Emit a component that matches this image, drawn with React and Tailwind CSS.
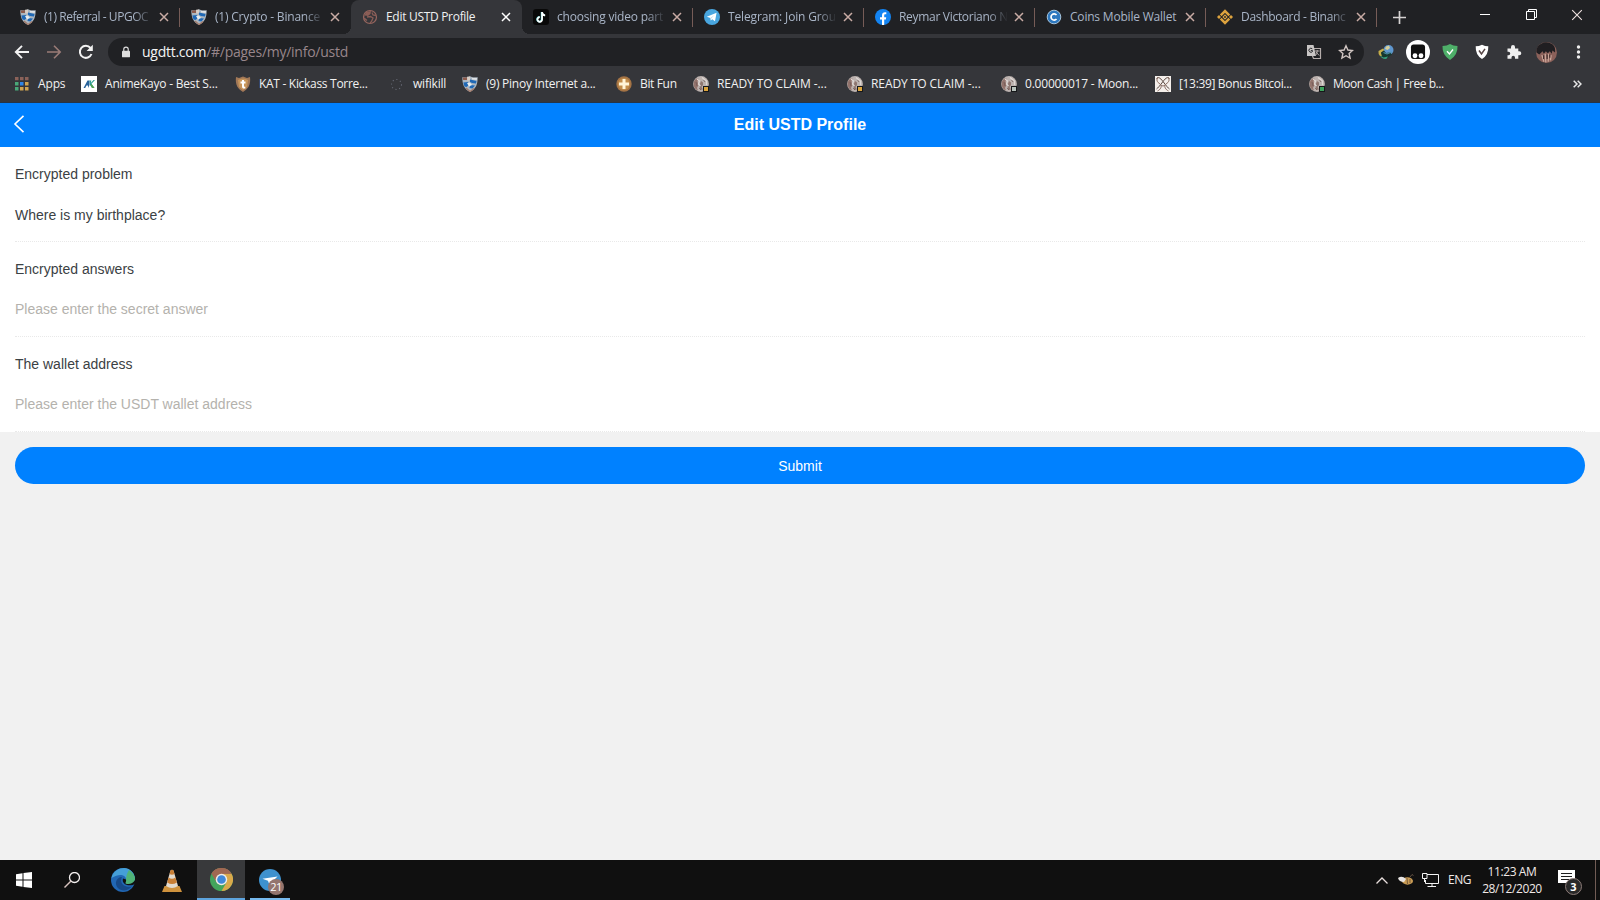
import clsx from "clsx";

const tabs = [
  { title: "(1) Referral - UPGOC", icon: "shield", fade: true, tracking: "tracking-[-0.45px]" },
  { title: "(1) Crypto - Binance", icon: "shield", fade: true, tracking: "tracking-[-0.2px]" },
  { title: "Edit USTD Profile", icon: "globe", active: true, tracking: "tracking-[-0.3px]" },
  { title: "choosing video part", icon: "tiktok", fade: true, tracking: "tracking-[-0.2px]" },
  { title: "Telegram: Join Grou", icon: "telegram", fade: true, tracking: "tracking-[-0.15px]" },
  { title: "Reymar Victoriano N", icon: "facebook", fade: true, tracking: "tracking-[-0.3px]" },
  { title: "Coins Mobile Wallet", icon: "coins", tracking: "tracking-[-0.2px]" },
  { title: "Dashboard - Binanc", icon: "binance", fade: true, tracking: "tracking-[-0.3px]" },
];

const bookmarks = [
  { title: "Apps", icon: "apps", width: "w-[67px]", tracking: "tracking-[-0.15px]" },
  { title: "AnimeKayo - Best S...", icon: "kayo", width: "w-[154px]", tracking: "tracking-[-0.2px]" },
  { title: "KAT - Kickass Torre...", icon: "kat", width: "w-[154px]", tracking: "tracking-[-0.3px]" },
  { title: "wifikill", icon: "dots", width: "w-[73px]", tracking: "tracking-[-0.2px]" },
  { title: "(9) Pinoy Internet a...", icon: "shield", width: "w-[154px]", tracking: "tracking-[-0.25px]" },
  { title: "Bit Fun", icon: "bitfun", width: "w-[77px]", tracking: "tracking-[-0.35px]" },
  { title: "READY TO CLAIM -...", icon: "moonGold", width: "w-[154px]", tracking: "tracking-[-0.08px]" },
  { title: "READY TO CLAIM -...", icon: "moonGold", width: "w-[154px]", tracking: "tracking-[-0.08px]" },
  { title: "0.00000017 - Moon...", icon: "moonGray", width: "w-[154px]", tracking: "tracking-[-0.2px]" },
  { title: "[13:39] Bonus Bitcoi...", icon: "knot", width: "w-[154px]", tracking: "tracking-[-0.34px]" },
  { title: "Moon Cash | Free b...", icon: "moonGreen", width: "w-[154px]", tracking: "tracking-[-0.46px]" },
];

const fields = [
  { label: "Encrypted problem", value: "Where is my birthplace?" },
  { label: "Encrypted answers", placeholder: "Please enter the secret answer" },
  { label: "The wallet address", placeholder: "Please enter the USDT wallet address" },
];

function Svg({ size = 16, children, className }) {
  return (
    <svg width={size} height={size} viewBox="0 0 16 16" fill="none" className={clsx("shrink-0", className)}>
      {children}
    </svg>
  );
}

function Moon({ badge }) {
  return (
    <Svg>
      <circle cx="8" cy="8" r="7.9" fill="#bcb2af" />
      <path d="M1.500 4.500C3 2 5 2 6 3L4.500 5.500L5.500 9L4 12L5 14.500C1 13 -.5 8 1.500 4.500Z" fill="#93736c" />
      <path d="M8 5L10 6.500V9L8.500 11L10 13.500L7 14L6.500 9Z" fill="#8e7670" />
      <path d="M4 3L6.500 5L5.500 8L7.500 10M9 1.500L13.500 5V9" stroke="#ded8d5" strokeWidth="1.200" />
      <path d="M3 6L4 10M6 12L8 14M10.500 4L12 6" stroke="#6b5551" strokeWidth=".7" />
      <rect x="10.500" y="10.500" width="5" height="5" fill={badge} stroke="#17181a" />
    </Svg>
  );
}

function SiteIcon({ name }) {
  switch (name) {
    case "shield":
      return (
        <Svg>
          <path d="M.3 1.200L5 1.500L8 .3L11 1.500L15.700 1.200C15.500 8 14.500 12.500 8 16C1.500 12.500 .5 8 .3 1.200Z" fill="#aab6c1" />
          <path d="M.8 1.500H5V4H1.200Z" fill="#8d5b4c" />
          <path d="M5 .8L8 .5V4L5.500 5Z" fill="#d9cfc6" />
          <path d="M8 3.500L14.500 5L14 7.500L10 7L8 6ZM1.300 6.500L6 6L7 9L4.500 11L2.500 10.500ZM8 9L13 9.500L10.500 12.500L7.500 12Z" fill="#1f68b5" />
          <path d="M5 7L8 6.500L10 9L7 10.500Z" fill="#e7edf0" />
          <path d="M10 1.800L15 2L14.700 4L10 3.500Z" fill="#dfe3e6" />
          <path d="M4 12L8 15.500L12 12.500" stroke="#a67b68" strokeWidth="1.200" />
        </Svg>
      );
    case "globe":
      return (
        <Svg>
          <circle cx="8" cy="8" r="6.500" stroke="#97665f" strokeWidth="1.200" />
          <path d="M4 2.800L9 2L8.500 5L6 7L3.500 6.500L2 8Z" fill="#8b5d56" />
          <path d="M5 8L8.500 7.500L11 9L9.500 12.500L8 14M10 3.500L11 6L14 6.500M2 9L5 11.500" stroke="#8b5d56" strokeWidth="1.300" />
        </Svg>
      );
    case "tiktok":
      return (
        <Svg>
          <rect width="16" height="16" rx="3" fill="#080808" />
          <path d="M8.700 3V10.200A2.300 2.300 0 1 1 6.500 8M8.700 3.300C9 5 10.200 6.200 12 6.300" stroke="#69dfe0" strokeWidth="1.800" />
          <path d="M9.100 3V10.400A2.300 2.300 0 1 1 6.800 8.200M9.100 3.500C9.400 5.200 10.500 6.300 12.200 6.500" stroke="#fff" strokeWidth="1.700" />
        </Svg>
      );
    case "telegram":
      return (
        <Svg>
          <circle cx="8" cy="8" r="8" fill="#49a6df" />
          <path d="M2.800 7.800L12.600 3.800L11 12.200L8.200 10.200L6.800 11.500L6.400 9Z" fill="#fff" />
          <path d="M6.400 9L10.500 5.900L7.200 9.500L6.800 11.500Z" fill="#b9d9ed" />
        </Svg>
      );
    case "facebook":
      return (
        <Svg>
          <circle cx="8" cy="8" r="8" fill="#1384f2" />
          <path d="M7 16V10.500H5V8.200H7V6.500C7 4.300 8.200 3.200 10 3.200L11.300 3.300V5.200H10.300C9.400 5.200 9.200 5.700 9.200 6.400V8.200H11.200L10.900 10.500H9.200V16Z" fill="#fff" />
        </Svg>
      );
    case "coins":
      return (
        <Svg>
          <circle cx="8" cy="8" r="6.800" fill="#2d78bf" stroke="#a6c4dc" strokeWidth="1" />
          <path d="M10.500 6A3.100 3.100 0 1 0 10.500 10" stroke="#fff" strokeWidth="1.700" />
        </Svg>
      );
    case "binance":
      return (
        <Svg>
          <path d="M3.700 6.300L8 2L12.300 6.300M3.700 9.700L8 14L12.300 9.700" stroke="#dda33e" strokeWidth="2.500" />
          <path d="M8 5.300L10.700 8L8 10.700L5.300 8ZM2 6L4 8L2 10L0 8ZM14 6L16 8L14 10L12 8Z" fill="#dda33e" />
          <circle cx="8" cy="8" r="1" fill="#303030" />
        </Svg>
      );
    case "apps":
      return (
        <Svg>
          <path d="M1 1H4.500V4.300H1ZM6 1H9.500V4.300H6ZM11 1H14.500V4.300H11Z" fill="#8b6259" />
          <path d="M1 6H4.500V9.500H1ZM1 11H4.500V14.500H1Z" fill="#49a878" />
          <path d="M6 6H9.500V9.500H6Z" fill="#2f86e6" />
          <path d="M11 6H14.500V9.500H11ZM6 11H9.500V14.500H6ZM11 11H14.500V14.500H11Z" fill="#cfa451" />
        </Svg>
      );
    case "kayo":
      return (
        <Svg>
          <rect width="16" height="16" fill="#fff" />
          <path d="M2.500 12L6.500 4.500H8.500V9L7 12V9.500H5.500L4.200 12Z" fill="#28639b" />
          <path d="M8.500 4.500H10.300L9.800 7L12.500 4H14L10.500 7.800L13.500 12H11L9 9Z" fill="#2a9c91" />
          <path d="M10.500 8L13.500 12H11.200L9.500 9Z" fill="#58a550" />
        </Svg>
      );
    case "kat":
      return (
        <Svg>
          <path d="M1 1L4 2L8 .5L12 2L15 1C16 9 13 13 8 16C3 13 0 9 1 1Z" fill="#a27857" />
          <path d="M3 4Q8 1 13 4L12 11L8 14L4 11Z" fill="#c8965b" />
          <path d="M8 4V10.500Q8 12 10.300 11.500M5.500 6.500H10.500" stroke="#fff" strokeWidth="2" />
        </Svg>
      );
    case "dots":
      return (
        <Svg>
          <circle cx="7.500" cy="8.500" r="5" stroke="#676a76" strokeWidth="1.100" strokeDasharray="1.100 2.700" />
        </Svg>
      );
    case "bitfun":
      return (
        <Svg>
          <circle cx="8" cy="8" r="7.700" fill="#a57445" />
          <circle cx="8" cy="8" r="6" fill="#c28e4c" />
          <path d="M6.500 3H9.500V6.500H13V9.500H9.500V13H6.500V9.500H3V6.500H6.500Z" fill="#fff5d8" />
        </Svg>
      );
    case "knot":
      return (
        <Svg>
          <rect width="16" height="16" fill="#f4efeb" />
          <path d="M1.500 3C3 .5 5 1.500 8 5.500S13 12 14.500 13M14.500 3C13 .5 11 1.500 8 5.500S3 12 1.500 13" stroke="#5b4942" strokeWidth="1" />
          <path d="M3 1C1 4 2 6 5 8S5 14 2.500 15M13 1C15 4 14 6 11 8S11 14 13.500 15M5 8Q8 12 11 8" stroke="#8a6d62" strokeWidth="1" />
        </Svg>
      );
    case "moonGold":
      return <Moon badge="#dca43b" />;
    case "moonGray":
      return <Moon badge="#b8c2bc" />;
    case "moonGreen":
      return <Moon badge="#3ca25c" />;
    default:
      return null;
  }
}

function Close({ color = "#c9aca5", size = 10, width = 1.5 }) {
  return (
    <svg width={size} height={size} viewBox="0 0 10 10" className="shrink-0">
      <path d="M1 1L9 9M9 1L1 9" stroke={color} strokeWidth={width} />
    </svg>
  );
}

function Tab({ tab, divider }) {
  return (
    <div
      className={clsx(
        "relative flex h-[34px] w-[171px] shrink-0 items-center pl-[11px]",
        tab.active && "rounded-t-lg bg-[#35363a] before:absolute before:bottom-0 before:-left-2 before:size-2 before:bg-[radial-gradient(circle_at_0_0,transparent_8px,#35363a_8px)] after:absolute after:-right-2 after:bottom-0 after:size-2 after:bg-[radial-gradient(circle_at_100%_0,transparent_8px,#35363a_8px)]",
      )}
    >
      <SiteIcon name={tab.icon} />
      <div
        className={clsx(
          "ml-2 w-[109px] text-[12px] leading-4 whitespace-nowrap",
          tab.tracking,
          tab.active ? "text-[#f0f1f2]" : "text-[#a9b5c7]",
          tab.fade && "[mask-image:linear-gradient(to_right,#000_82%,transparent_100%)]",
        )}
      >
        {tab.title}
      </div>
      <div className="ml-[6px] flex">
        <Close color={tab.active ? "#fff" : undefined} />
      </div>
      {divider && <div className="absolute top-2 right-0 h-[19px] w-px bg-[#765c57]" />}
    </div>
  );
}

function TabStrip() {
  return (
    <div className="flex h-[34px] bg-[#202124] pl-[9px]">
      {tabs.map((tab, i) => (
        <Tab key={tab.title} tab={tab} divider={i !== 1 && i !== 2} />
      ))}
      <div className="flex w-[45px] items-center justify-center">
        <svg width="13" height="13" viewBox="0 0 13 13">
          <path d="M6.500 0V13M0 6.500H13" stroke="#d5d2d2" strokeWidth="1.700" />
        </svg>
      </div>
      <div className="ml-auto flex h-[29px] items-center">
        <div className="flex w-[46px] justify-center">
          <div className="h-px w-[10px] bg-white" />
        </div>
        <div className="flex w-[46px] justify-center">
          <svg width="11" height="11" viewBox="0 0 11 11" fill="none">
            <path d="M.5 2.500H8.500V10.500H.5ZM2.500 2.500V.5H10.500V8.500H8.500" stroke="#fff" />
          </svg>
        </div>
        <div className="flex w-[46px] justify-center">
          <Close color="#f1e4e2" size={12} width={0.9} />
        </div>
      </div>
    </div>
  );
}

function Toolbar() {
  return (
    <div className="flex h-9 items-center bg-[#35363a]">
      <div className="flex w-[108px] items-center gap-4 pl-[14px]">
        <Svg>
          <path d="M15 8H2M8 1.800L1.800 8L8 14.200" stroke="#f3f3f3" strokeWidth="1.900" />
        </Svg>
        <Svg>
          <path d="M1 8H14M8 1.800L14.200 8L8 14.200" stroke="#9a7c77" strokeWidth="1.600" />
        </Svg>
        <Svg>
          <path d="M13.500 10A6 6 0 1 1 12.500 4" stroke="#f3f3f3" strokeWidth="2" />
          <path d="M14.800 .8V7H8.600Z" fill="#f3f3f3" />
        </Svg>
      </div>
      <div className="flex h-[28px] w-[1256px] items-center rounded-full bg-[#202124] pr-[10px] pl-[14px]">
        <svg width="8" height="12" viewBox="0 0 9 13" fill="none">
          <path d="M2 6V3.500A2.500 2.500 0 0 1 7 3.500V6" stroke="#dedede" strokeWidth="1.300" />
          <rect y="5" width="9" height="7.500" rx="1" fill="#dedede" />
        </svg>
        <div className="ml-[12px] text-[14px] leading-5 tracking-[-0.26px] text-[#98868b]">
          <span className="text-[#f4f5f5]">ugdtt.com</span>/#/pages/my/info/ustd
        </div>
        <div className="ml-auto flex items-center gap-4">
          <Svg>
            <path d="M7 4.500H14.500V14.500H7.500L6.500 12" stroke="#b5adab" strokeWidth="1.200" />
            <path d="M1 1H7.500L10 12H1Z" fill="#c9c6c5" />
            <path d="M6.300 4.800A2 2 0 1 0 6.500 7.500V6.600H4.800" stroke="#27282b" />
            <path d="M9 7H13.500M11.200 6V7C11.200 9 10.500 10.500 9.500 11.500M10 8L13.200 11.500" stroke="#b5adab" />
          </Svg>
          <Svg>
            <path d="M8 1.800L9.900 6L14.500 6.500L11.100 9.500L12.100 14L8 11.700L3.900 14L4.900 9.500L1.500 6.500L6.100 6Z" stroke="#d0c5c2" strokeWidth="1.400" />
          </Svg>
        </div>
      </div>
      <div className="flex items-center pl-[6px]">
        <div className="flex w-[31px] justify-center">
          <Svg>
            <circle cx="10.500" cy="6" r="5" fill="#5f97cf" />
            <path d="M8 2.500L11 1.500L12 4L9.500 6L7 5Z" fill="#d8cf9a" />
            <path d="M.5 7L5 4.500L6.500 6L3 9L5 12H2Q0 10 .5 7Z" fill="#c5ad4a" />
            <path d="M3 8.500L6 6.500L8 9L12 8.500L14 10.500L9 14L4 13Z" fill="#16382f" />
            <path d="M2 11.500L5.500 13.500L10 12.500L8.500 14.800Q4 15.500 2 11.500Z" fill="#35a07b" />
            <path d="M5.500 8.500L9 10L13.500 8" stroke="#4c90a8" strokeWidth="1.100" />
          </Svg>
        </div>
        <div className="flex w-[33px] justify-center">
          <Svg size={24}>
            <circle cx="8" cy="8" r="8" fill="#fff" />
            <rect x="3.300" y="3" width="9.400" height="9.700" rx="1.800" fill="#111" />
            <circle cx="6" cy="10.500" r="1.600" fill="#fff" />
            <circle cx="10" cy="10.500" r="1.600" fill="#fff" />
          </Svg>
        </div>
        <div className="flex w-8 justify-center">
          <Svg>
            <path d="M8 0Q11 2 15.500 2Q16 11 8 16Q0 11 .5 2Q5 2 8 0Z" fill="#4eaf69" />
            <path d="M5 7.200L7.500 10L11 5.500" stroke="#fff" strokeWidth="1.400" />
          </Svg>
        </div>
        <div className="flex w-8 justify-center">
          <Svg>
            <path d="M8 .8Q11 2.300 14.300 2.300Q14.700 11 8 15Q1.300 11 1.700 2.300Q5 2.300 8 .8Z" fill="#fff" />
            <path d="M5 6.500L7.500 10L11 4.800" stroke="#574545" strokeWidth="1.500" />
          </Svg>
        </div>
        <div className="flex w-8 justify-center">
          <Svg>
            <path d="M1.500 4.500H5V3A2 2 0 0 1 9 3V4.500H12.300V7.300H13.300A2 2 0 0 1 13.300 11.300H12.300V14.700H9V13.500A1.700 1.700 0 0 0 5.500 13.500V14.700H1.500V11.300H2.500A1.700 1.700 0 0 0 2.500 7.800H1.500Z" fill="#efefef" />
          </Svg>
        </div>
        <div className="flex w-8 justify-center">
          <Svg size={21}>
            <circle cx="8" cy="8" r="8" fill="#8b615a" />
            <path d="M.3 8Q0 3 4 1.300Q8 -1 12.500 1.700Q15 3.500 14.500 8L12.500 6.500L12 9L10.500 7L9 8.500L7.500 7L6 9L5 7L2.500 9.500Z" fill="#201e21" />
            <path d="M4.500 10L6 15M7 9L7.500 15.500M9.500 9L9.300 15M11.500 10L11 14" stroke="#cba699" strokeWidth="1" />
            <path d="M5.800 10V13M8.500 9.500V13M10.500 9.500V12" stroke="#3c2928" strokeWidth=".8" />
          </Svg>
        </div>
        <div className="flex w-8 justify-center">
          <Svg>
            <circle cx="8.500" cy="3" r="1.700" fill="#eee" />
            <circle cx="8.500" cy="8" r="1.700" fill="#eee" />
            <circle cx="8.500" cy="13" r="1.700" fill="#eee" />
          </Svg>
        </div>
      </div>
    </div>
  );
}

function BookmarksBar() {
  return (
    <div className="flex h-[33px] items-center border-b border-[#253447] bg-[#35363a] pb-[4px] pl-[14px]">
      {bookmarks.map((b, i) => (
        <div key={i} className={clsx("flex shrink-0 items-center gap-2", b.width)}>
          <SiteIcon name={b.icon} />
          <span className={clsx("text-[12px] leading-4 whitespace-nowrap text-[#f1f1f1]", b.tracking)}>{b.title}</span>
        </div>
      ))}
      <svg width="9" height="8" viewBox="0 0 9 8" fill="none" className="mr-[18px] ml-auto">
        <path d="M.7 .7L4 4L.7 7.300M4.700 .7L8 4L4.700 7.300" stroke="#e8e8e8" strokeWidth="1.500" />
      </svg>
    </div>
  );
}

function ProfilePage() {
  return (
    <main className="flex-1 bg-[#f1f1f1] font-['Liberation_Sans',Arial,sans-serif] text-[14px] text-[#3b4144]">
      <header className="grid h-[44px] grid-cols-[1fr_auto_1fr] items-center bg-[#0081ff] text-white">
        <svg width="12" height="18" viewBox="0 0 12 18" fill="none" className="mb-[2px] ml-[13px]">
          <path d="M10.500 .8L2 9L10.500 17.200" stroke="#fff" strokeWidth="1.600" />
        </svg>
        <h1 className="text-[16px] font-bold">Edit USTD Profile</h1>
      </header>
      <form className="bg-white px-[15px]">
        {fields.map((f) => (
          <div key={f.label} className="h-[95px] border-b border-dotted border-[#e9e9e9] pt-[17px]">
            <div className="leading-5">{f.label}</div>
            {f.value ? (
              <div className="mt-[21px] leading-5">{f.value}</div>
            ) : (
              <div className="mt-5 leading-5 text-[#b4b2ad]">{f.placeholder}</div>
            )}
          </div>
        ))}
      </form>
      <div className="px-[15px] pt-[15px]">
        <button className="block h-[37px] w-full rounded-full bg-[#0081ff] pt-[2px] text-white">Submit</button>
      </div>
    </main>
  );
}

function Taskbar() {
  return (
    <footer className="flex h-10 items-center bg-[#101010]">
      <div className="flex w-12 justify-center">
        <Svg>
          <path d="M0 2.200L6.500 1.300V7.500H0ZM7.500 1.100L16 0V7.500H7.500ZM0 8.500H6.500V14.700L0 13.800ZM7.500 8.500H16V16L7.500 14.900Z" fill="#fff" />
        </Svg>
      </div>
      <div className="flex w-12 justify-center">
        <Svg>
          <circle cx="10.500" cy="5.500" r="5" stroke="#f2eeee" strokeWidth="1.300" />
          <path d="M7 9L.5 15.500" stroke="#d9c4bf" strokeWidth="1.400" />
        </Svg>
      </div>
      <div className="flex w-[53px] justify-center">
        <svg width="24" height="24" viewBox="0 0 24 24" fill="none">
          <circle cx="12" cy="12" r="12" fill="#2167b4" />
          <path d="M.5 10C2 3 8 0 13 0C20 0 24 6 24 11C24 15 20 17 15.500 16C13.500 15.500 14.500 14 15 12.500C16 8 10 4 .5 10Z" fill="#459fd8" />
          <path d="M18 2C22 5 24 8 24 11C24 15 20 17 15.500 16C13.500 15.500 14.500 14 15 12.500C15.500 9 15 7 18 2Z" fill="#50b377" />
          <path d="M11 9C8 15 13 20 21 18.500C14 26 4 22 5 14C5.500 11 8 9 11 9Z" fill="#174987" />
          <path d="M12 10.500C10.500 15 15 18.500 22 17L24 15.500V12C22 16 17.500 16.800 14.500 15.500C14.200 14.500 15.500 13.500 15 11.500Z" fill="#101010" />
        </svg>
      </div>
      <div className="flex w-12 justify-center pr-[2px]">
        <svg width="20" height="23" viewBox="0 0 20 23">
          <path d="M2.500 17H17.500L20 23H0Z" fill="#cf923d" />
          <path d="M8.500 1.500Q10 0 11.500 1.500L16 17Q10 21 4 17Z" fill="#e3dbcf" />
          <path d="M8.500 1.500Q10 0 11.500 1.500L12.500 5Q10 6.500 7.500 5ZM6.600 8.500Q10 11 13.400 8.500L14.900 13.500Q10 16.500 5.200 13.500Z" fill="#c97f35" />
        </svg>
      </div>
      <div className="flex h-10 w-12 items-center justify-center border-b-2 border-[#5da4de] bg-[#38393b] pt-[1px]">
        <svg width="23" height="23" viewBox="0 0 24 24">
          <circle cx="12" cy="12" r="12" fill="#43a55c" />
          <path d="M12 12L1.600 6A12 12 0 0 1 22.400 6Z" fill="#a06852" />
          <path d="M12 6H22.400A12 12 0 0 1 12 24L17.200 15Z" fill="#d9a94b" />
          <path d="M1.600 6L6.800 15L12 12V6H22.400A12 12 0 0 0 1.600 6Z" fill="#a06852" />
          <circle cx="12" cy="12" r="6" fill="#f0ece8" />
          <circle cx="12" cy="12" r="4.500" fill="#4089d9" />
        </svg>
      </div>
      <div className="ml-[5px] flex h-10 w-10 items-center justify-center border-b-2 border-[#76b9ed] pt-[2px]">
        <div className="relative">
          <Svg size={22}>
            <circle cx="8" cy="8" r="8" fill="#3e91ce" />
            <path d="M2.500 7L13.500 5.500L7.500 11L6.500 8.500Z" fill="#fff" />
          </Svg>
          <div className="absolute top-[10px] left-[9px] flex size-4 items-center justify-center rounded-full bg-[#94756e] text-[11px] tracking-[-0.5px] text-white">
            21
          </div>
        </div>
      </div>
      <div className="ml-auto flex h-10 items-center text-[12px] leading-[17px] text-[#f1e9e7]">
        <svg width="12" height="7" viewBox="0 0 12 7" fill="none">
          <path d="M.5 6.500L6 1L11.500 6.500" stroke="#e9dfdd" strokeWidth="1.300" />
        </svg>
        <svg width="16" height="14" viewBox="0 0 16 14" className="ml-[10px]">
          <ellipse cx="9.500" cy="8" rx="5.500" ry="3.700" fill="#c99c55" />
          <path d="M0 5Q4 2 8 6L6 9Q1 9 0 5Z" fill="#e8e5e3" />
          <path d="M9 5L9.500 11M12 6V10" stroke="#7a5c3a" fill="none" />
          <path d="M12 4L14 1.500L15.500 2.500" stroke="#625042" fill="none" />
        </svg>
        <svg width="17" height="14" viewBox="0 0 17 14" fill="none" className="ml-[8px]">
          <path d="M5 1.500H16.500V10.500H3.500V7M.5 .5H5V5.500H.5ZM2.500 5.500V9M10 10.500V13.500M5.500 13.500H14" stroke="#f2f2f2" />
        </svg>
        <div className="ml-[9px] w-[24px] pb-px tracking-[-0.45px]">ENG</div>
        <div className="ml-[8px] w-[64px] pb-px text-center tracking-[-0.4px] whitespace-nowrap">
          <div>11:23 AM</div>
          <div>28/12/2020</div>
        </div>
        <div className="relative ml-[14px] h-[20px] w-[26px]">
          <svg width="17" height="17" viewBox="0 0 17 17">
            <path d="M0 0H17V13H12L9 17V13H0Z" fill="#fff" />
            <path d="M3 3.500H14M3 6.500H14M3 9.500H11" stroke="#202020" />
          </svg>
          <div className="absolute top-[8px] left-[7px] flex size-[17px] items-center justify-center rounded-full border border-[#8d7c78] bg-[#292929] text-[11px] font-bold text-white">
            3
          </div>
        </div>
        <div className="ml-[11px] h-10 w-px bg-[#715c55]" />
        <div className="w-1" />
      </div>
    </footer>
  );
}

export default function App() {
  return (
    <div className="flex h-[900px] w-[1600px] flex-col overflow-hidden font-['Open_Sans','Noto_Sans',sans-serif]">
      <TabStrip />
      <Toolbar />
      <BookmarksBar />
      <ProfilePage />
      <Taskbar />
    </div>
  );
}
